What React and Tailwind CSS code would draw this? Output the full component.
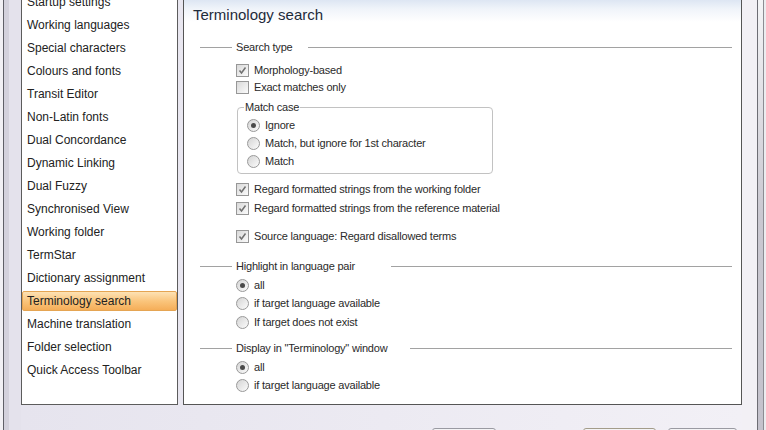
import React from "react";

const items = [
  "Startup settings",
  "Working languages",
  "Special characters",
  "Colours and fonts",
  "Transit Editor",
  "Non-Latin fonts",
  "Dual Concordance",
  "Dynamic Linking",
  "Dual Fuzzy",
  "Synchronised View",
  "Working folder",
  "TermStar",
  "Dictionary assignment",
  "Terminology search",
  "Machine translation",
  "Folder selection",
  "Quick Access Toolbar",
];

function CheckBox({ checked }) {
  return (
    <span className="w-[13px] h-[13px] shrink-0 border border-[#979797] bg-linear-to-br from-[#d9d9d9] to-[#fbfbfb] flex items-center justify-center">
      {checked && (
        <svg width="9" height="9" viewBox="0 0 9 9">
          <path d="M1.5 4.5 L3.5 7 L7.5 1.5" fill="none" stroke="#707070" strokeWidth="1.5" />
        </svg>
      )}
    </span>
  );
}

function Radio({ checked }) {
  return (
    <span className="w-[13px] h-[13px] shrink-0 rounded-full border border-[#999] bg-linear-to-br from-[#d4d4d4] to-[#fcfcfc] flex items-center justify-center">
      {checked && <span className="w-[5px] h-[5px] rounded-full bg-[#4a4a4a]" />}
    </span>
  );
}

function Row({ kind, checked, label, className }) {
  return (
    <div className={"flex items-center gap-[5px] " + className}>
      {kind === "check" ? <CheckBox checked={checked} /> : <Radio checked={checked} />}
      <span>{label}</span>
    </div>
  );
}

export default function App() {
  return (
    <div className="w-[766px] h-[430px] overflow-hidden flex bg-[#e7e5ee] text-[#222] font-['Liberation_Sans',Arial,sans-serif]">
      {/* left window edge */}
      <div className="flex w-[21px] shrink-0">
        <div className="w-[3px] bg-[#f1f0f4]" />
        <div className="w-[1px] bg-[#5f5f67]" />
        <div className="w-[5px] bg-[#d3d1dc]" />
        <div className="flex-1 bg-[#e4e2ec]" />
      </div>

      <div className="w-[721px] shrink-0 flex flex-col bg-linear-to-r from-[#e6e4ee] to-[#f2f0f6]">
        <div className="h-[405px] flex">
          {/* category list */}
          <div className="w-[157px] border-x border-b border-[#5c5c5c] bg-white overflow-hidden text-[12px]">
            <div className="mt-[-10px]">
              {items.map((it) =>
                it === "Terminology search" ? (
                  <div key={it} className="h-[23px] pt-[2px] pb-[1px]">
                    <div className="h-[20px] flex items-center pl-[4px] border border-[#e5a553] rounded-[2px] bg-linear-to-b from-[#fde2b4] via-[#fac57c] to-[#f5ae58]">
                      {it}
                    </div>
                  </div>
                ) : (
                  <div key={it} className="h-[23px] flex items-center pl-[5px]">
                    {it}
                  </div>
                )
              )}
            </div>
          </div>

          <div className="w-[5px]" />

          {/* settings page */}
          <div className="w-[559px] border-x border-b border-[#555] bg-white text-[11px] tracking-[-0.2px] text-[#2a2a2a]">
            <div className="h-[30px] flex items-center pl-[9px] text-[15px] tracking-normal text-[#1e2b3b] bg-[linear-gradient(180deg,#dde6f3_0px,#f0f4fa_9px,#ffffff_22px)]">
              Terminology search
            </div>

            <div className="pl-[16px] pr-[9px]">
              <fieldset className="mt-[8px] border-t border-[#a2a2a2]">
                <legend className="ml-[32px] w-[76px] px-[4px] h-[18px] leading-[18px]">Search type</legend>
                <div className="pl-[36px]">
                  <Row kind="check" checked label="Morphology-based" className="mt-[6px] h-[17px]" />
                  <Row kind="check" label="Exact matches only" className="h-[17px]" />
                </div>
                <fieldset className="ml-[37px] w-[256px] mt-[4px] border border-[#c2c2c2] rounded-[4px] pb-[3px] pl-[9px]">
                  <legend className="ml-[-3px] px-[1px] leading-[14px]">Match case</legend>
                  <Row kind="radio" checked label="Ignore" className="mt-[2px] h-[18px]" />
                  <Row kind="radio" label="Match, but ignore for 1st character" className="h-[18px]" />
                  <Row kind="radio" label="Match" className="h-[18px]" />
                </fieldset>
                <div className="pl-[36px]">
                  <Row kind="check" checked label="Regard formatted strings from the working folder" className="mt-[6px] h-[19px]" />
                  <Row kind="check" checked label="Regard formatted strings from the reference material" className="h-[19px]" />
                  <Row kind="check" checked label="Source language: Regard disallowed terms" className="mt-[10px] h-[17px]" />
                </div>
              </fieldset>

              <fieldset className="mt-[12px] border-t border-[#a2a2a2]">
                <legend className="ml-[32px] w-[159px] px-[4px] h-[18px] leading-[18px]">Highlight in language pair</legend>
                <div className="pl-[36px]">
                  <Row kind="radio" checked label="all" className="mt-[1px] h-[18px]" />
                  <Row kind="radio" label="if target language available" className="h-[18px]" />
                  <Row kind="radio" label="If target does not exist" className="mt-[1px] h-[18px]" />
                </div>
              </fieldset>

              <fieldset className="mt-[8px] border-t border-[#a2a2a2]">
                <legend className="ml-[32px] w-[178px] px-[4px] h-[18px] leading-[18px]">Display in "Terminology" window</legend>
                <div className="pl-[36px]">
                  <Row kind="radio" checked label="all" className="mt-[1px] h-[18px]" />
                  <Row kind="radio" label="if target language available" className="h-[18px]" />
                </div>
              </fieldset>
            </div>
          </div>
        </div>

        {/* dialog buttons, cut off at the bottom */}
        <div className="h-[25px] flex items-start pl-[411px] pt-[23px]">
          <div className="w-[64px] h-[20px] border border-[#9a9aa2] rounded-[3px] bg-[#f3f3f5]" />
          <div className="w-[73px] h-[20px] ml-[87px] border border-[#a39c8a] rounded-[3px] bg-[#f3f3f5]" />
          <div className="w-[69px] h-[20px] ml-[12px] border border-[#9a9aa2] rounded-[3px] bg-[#f3f3f5]" />
        </div>
      </div>

      {/* right window edge */}
      <div className="flex w-[24px] shrink-0">
        <div className="w-[15px] bg-[#f2f0f5]" />
        <div className="w-[1px] bg-[#6d6d74]" />
        <div className="w-[5px] bg-linear-to-b from-[#f4f4f6] via-[#cac8d1] to-[#c4c2cc]" />
        <div className="w-[1px] bg-[#8c8c92]" />
        <div className="w-[2px] bg-[#ececef]" />
      </div>
    </div>
  );
}
